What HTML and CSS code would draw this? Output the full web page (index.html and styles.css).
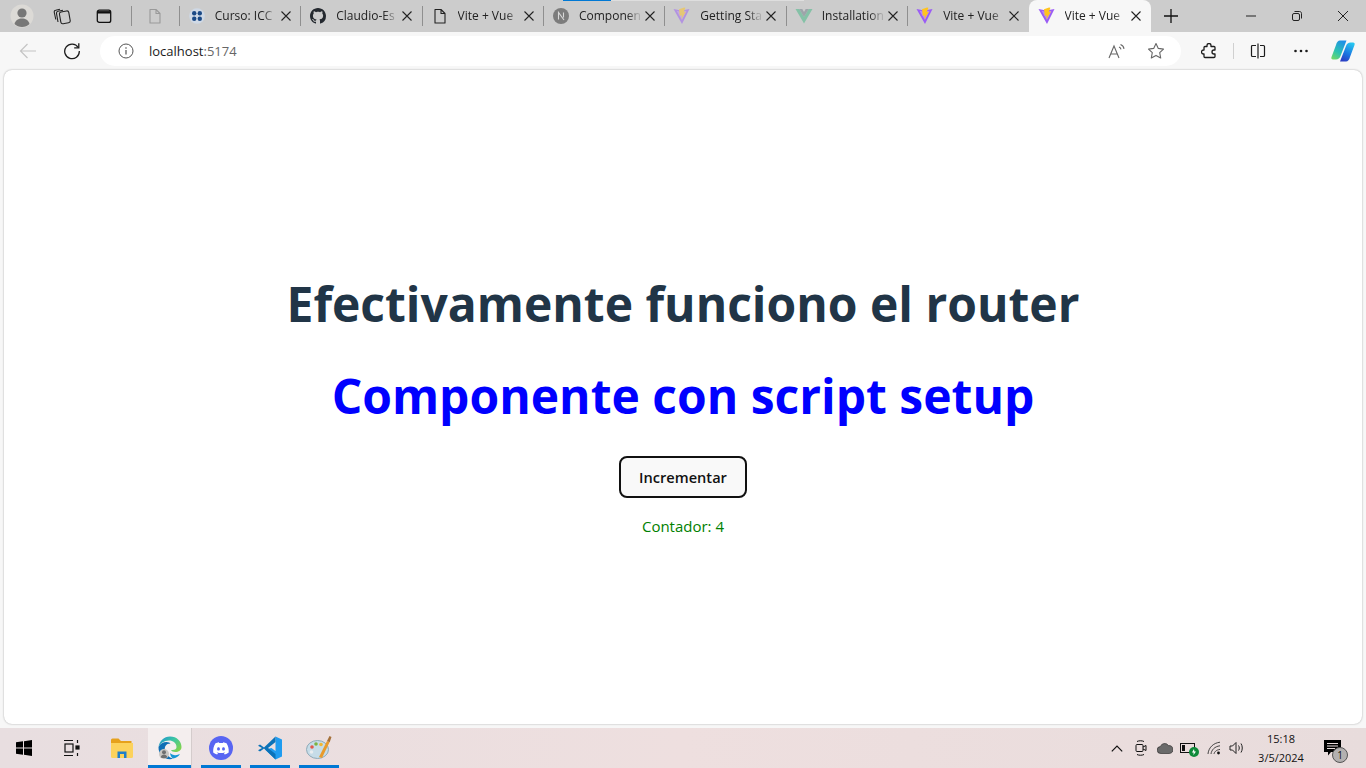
FILE: index.html
```html
<!DOCTYPE html>
<html lang="es">
<head>
  <meta charset="UTF-8" />
  <meta name="viewport" content="width=device-width, initial-scale=1.0"/>
  <title>Vite + Vue</title>
  <link rel="stylesheet" href="styles.css">
</head>
<body>
  <svg class="defs" width="0" height="0" aria-hidden="true">
    <symbol id="x" viewBox="0 0 12 12"><path d="M1.500 1.500l9 9M10.500 1.500l-9 9" fill="none" stroke="#222" stroke-width="1.100"/></symbol>
    <symbol id="doc" viewBox="0 0 16 16"><path d="M3 1.500h6l4 4v9.500H3zM9 1.500v4h4" fill="none" stroke="currentColor" stroke-width="1.100" stroke-linejoin="round"/></symbol>
    <symbol id="vite" viewBox="0 0 18 18">
      <path d="M0.500 2L8.300 3.600 16.500 2 9 17z" fill="#9a5cf5"/>
      <path d="M3.500 3.700L8.300 4.700 13.600 3.700 9 13z" fill="#c39cf8" opacity=".75"/>
      <path d="M11 0.500L6 2.300 6.800 9 8.800 8.200 8.400 12.600 13 4.600 10.800 5.200 12.400 0.800z" fill="#ffc41f"/>
    </symbol>
  </svg>

  <header class="tabstrip">
    <div class="strip-left">
      <span class="avatar">
        <svg width="24" height="24" viewBox="0 0 24 24"><circle cx="12" cy="12" r="11.500" fill="#dcdad6"/><circle cx="12" cy="9" r="4.600" fill="#777"/><path d="M4.500 20c1-4 4-5.500 7.500-5.500s6.500 1.500 7.500 5.500c-2 2-4.500 3-7.500 3s-5.500-1-7.500-3z" fill="#777"/></svg>
      </span>
      <span class="strip-btn">
        <svg width="18" height="18" viewBox="0 0 18 18" fill="none" stroke="#222" stroke-width="1.100"><rect x="7" y="4.500" width="9.500" height="12" rx="2" transform="rotate(-10 11 10)"/><path d="M5 15L3.500 6.500c-.2-1.200.4-2 1.500-2.200L10 3.300M2.800 12.500L1.300 5.500C1 4.300 1.600 3.400 2.600 3.200L7 2.200"/></svg>
      </span>
      <span class="strip-btn">
        <svg width="16" height="16" viewBox="0 0 16 16" fill="none" stroke="#111" stroke-width="1.300"><rect x="1.300" y="2.200" width="13.400" height="12.200" rx="2"/><path d="M1.300 4.300h13.400" stroke-width="2.400"/></svg>
      </span>
    </div>

    <div class="tab tab-blank"><svg class="fav blank" width="16" height="16"><use href="#doc"/></svg></div>

    <div class="tab">
      <svg class="fav" width="16" height="16" viewBox="0 0 16 16"><circle cx="8" cy="8" r="7.800" fill="#cfd9e6"/><g fill="#1c4a86"><circle cx="5.200" cy="5.200" r="2.200"/><circle cx="10.800" cy="5.200" r="2.200"/><circle cx="5.200" cy="10.800" r="2.200"/><circle cx="10.800" cy="10.800" r="2.200"/></g></svg>
      <span class="tab-title">Curso: ICC</span>
      <svg class="close" width="12" height="12"><use href="#x"/></svg>
    </div>
    <div class="tab">
      <svg class="fav" width="16" height="16" viewBox="0 0 16 16"><path fill="#24292f" d="M8 0C3.580 0 0 3.580 0 8c0 3.540 2.290 6.530 5.470 7.590.4.070.55-.17.55-.38 0-.19-.01-.82-.01-1.490-2.010.37-2.530-.49-2.690-.94-.09-.23-.48-.94-.82-1.130-.28-.15-.68-.52-.01-.53.63-.01 1.080.58 1.230.82.720 1.210 1.870.87 2.330.66.070-.52.280-.87.510-1.070-1.780-.2-3.640-.89-3.640-3.950 0-.87.310-1.590.820-2.150-.08-.2-.36-1.020.08-2.120 0 0 .67-.21 2.200.820.640-.18 1.320-.27 2-.27s1.360.09 2 .27c1.530-1.040 2.200-.82 2.200-.82.440 1.100.16 1.920.08 2.120.510.56.820 1.270.820 2.150 0 3.070-1.870 3.750-3.650 3.950.290.250.540.730.540 1.480 0 1.070-.01 1.930-.01 2.200 0 .21.150.46.550.38A8.010 8.010 0 0 0 16 8c0-4.420-3.580-8-8-8z"/></svg>
      <span class="tab-title">Claudio-Es</span>
      <svg class="close" width="12" height="12"><use href="#x"/></svg>
    </div>
    <div class="tab">
      <svg class="fav dark" width="16" height="16"><use href="#doc"/></svg>
      <span class="tab-title">Vite + Vue</span>
      <svg class="close" width="12" height="12"><use href="#x"/></svg>
    </div>
    <div class="tab">
      <svg class="fav" width="16" height="16" viewBox="0 0 16 16"><circle cx="8" cy="8" r="8" fill="#7c7c7c"/><path d="M5.500 11.500v-7l5.500 7.500M10.500 4.500v5" fill="none" stroke="#d8d8d8" stroke-width="1.100"/></svg>
      <span class="tab-title">Componen</span>
      <svg class="close" width="12" height="12"><use href="#x"/></svg>
    </div>
    <div class="tab">
      <svg class="fav faded" width="18" height="18"><use href="#vite"/></svg>
      <span class="tab-title">Getting Sta</span>
      <svg class="close" width="12" height="12"><use href="#x"/></svg>
    </div>
    <div class="tab">
      <svg class="fav faded" width="18" height="18" viewBox="0 0 18 18"><path d="M0.500 2h3.800L9 10l4.700-8h3.800L9 16.500z" fill="#41b883"/><path d="M4.300 2h3L9 5l1.700-3h3L9 10z" fill="#35495e" opacity=".6"/></svg>
      <span class="tab-title">Installation</span>
      <svg class="close" width="12" height="12"><use href="#x"/></svg>
    </div>
    <div class="tab">
      <svg class="fav" width="18" height="18"><use href="#vite"/></svg>
      <span class="tab-title">Vite + Vue</span>
      <svg class="close" width="12" height="12"><use href="#x"/></svg>
    </div>
    <div class="tab tab-active">
      <svg class="fav" width="18" height="18"><use href="#vite"/></svg>
      <span class="tab-title">Vite + Vue</span>
      <svg class="close" width="12" height="12"><use href="#x"/></svg>
    </div>

    <span class="new-tab">
      <svg width="16" height="16" viewBox="0 0 16 16"><path d="M8 1v14M1 8h14" stroke="#111" stroke-width="1.300"/></svg>
    </span>

    <div class="win-controls">
      <span class="win-btn"><svg width="12" height="12" viewBox="0 0 12 12"><path d="M1 6h10" stroke="#222" stroke-width="1"/></svg></span>
      <span class="win-btn"><svg width="12" height="12" viewBox="0 0 12 12" fill="none" stroke="#222"><rect x="1.500" y="3.500" width="7" height="7" rx="1.500"/><path d="M3.500 1.500h5c1.200 0 2 .8 2 2v5"/></svg></span>
      <span class="win-btn"><svg width="12" height="12" viewBox="0 0 12 12"><path d="M1 1l10 10M11 1L1 11" stroke="#222" stroke-width="1"/></svg></span>
    </div>
    <div class="load-bar"><span class="load-done"></span></div>
  </header>

  <nav class="toolbar">
    <span class="tool-btn back">
      <svg width="18" height="18" viewBox="0 0 18 18" fill="none" stroke="#c4c4c4" stroke-width="1.200"><path d="M17 9H1.500M8.500 2L1.500 9l7 7"/></svg>
    </span>
    <span class="tool-btn reload">
      <svg width="18" height="18" viewBox="0 0 18 18" fill="none" stroke="#1c1c1c" stroke-width="1.300"><path d="M15.200 5.500A7.300 7.300 0 1 0 16.300 9"/><path d="M15.800 1.200v4.600h-4.600"/></svg>
    </span>
    <div class="address">
      <svg class="info" width="16" height="16" viewBox="0 0 16 16" fill="none" stroke="#555"><circle cx="8" cy="8" r="7"/><path d="M8 7v4.500M8 4.300v1.400" stroke-width="1.200"/></svg>
      <span class="url">localhost<span class="port">:5174</span></span>
      <svg class="addr-icon read" width="18" height="16" viewBox="0 0 18 16" fill="none" stroke="#666" stroke-width="1.100"><path d="M1 15L6 3l5 12M2.800 11h6.400M11 4c1.200.4 1.800 1.200 2 2.400M12.500 1.500c2 .7 3.200 2.200 3.500 4.300"/></svg>
      <svg class="addr-icon star" width="18" height="18" viewBox="0 0 18 18" fill="none" stroke="#666" stroke-width="1.100" stroke-linejoin="round"><path d="M9 1.500l2.300 4.900 5.200.7-3.800 3.600 1 5.300L9 13.400 4.300 16l1-5.300L1.500 7.100l5.200-.7z"/></svg>
    </div>
    <span class="tool-btn ext">
      <svg width="16" height="16" viewBox="0 0 16 16" fill="none" stroke="#1c1c1c" stroke-width="1.300" stroke-linejoin="round"><path d="M6 2.500a2 2 0 0 1 4 0V3.500h3a1 1 0 0 1 1 1v2.500h-1a2 2 0 0 0 0 4h1v2.500a1 1 0 0 1-1 1H4a1 1 0 0 1-1-1V11H2.500a2 2 0 0 1 0-4H3V4.500a1 1 0 0 1 1-1h2z"/></svg>
    </span>
    <span class="tool-sep"></span>
    <span class="tool-btn split">
      <svg width="16" height="16" viewBox="0 0 16 16" fill="none" stroke="#1c1c1c" stroke-width="1.200"><path d="M6 2.500H2.500a1 1 0 0 0-1 1v9a1 1 0 0 0 1 1H6M10 2.500h3.500a1 1 0 0 1 1 1v9a1 1 0 0 1-1 1H10M8 .5v15"/></svg>
    </span>
    <span class="tool-btn more">
      <svg width="16" height="4" viewBox="0 0 16 4" fill="#1c1c1c"><circle cx="2.500" cy="2" r="1.300"/><circle cx="8" cy="2" r="1.300"/><circle cx="13.500" cy="2" r="1.300"/></svg>
    </span>
    <span class="tool-btn copilot">
      <svg width="24" height="24" viewBox="0 0 24 24"><defs><linearGradient id="cpa" x1="0.700" y1="0" x2="0.200" y2="1"><stop offset="0" stop-color="#1e8fe8"/><stop offset=".6" stop-color="#2cc3b0"/><stop offset="1" stop-color="#6fd86a"/></linearGradient><linearGradient id="cpb" x1="0.700" y1="0" x2="0.300" y2="1"><stop offset="0" stop-color="#27c6f0"/><stop offset=".6" stop-color="#1b74e0"/><stop offset="1" stop-color="#2b3fc4"/></linearGradient></defs><path d="M9 1.500h6.500L9.500 17c-.8 2-2.200 3.500-4.500 3.500H2c-1.500 0-2-1.200-1.500-2.500L5 6c.8-2.800 2-4.500 4-4.500z" fill="url(#cpa)"/><path d="M15 22.500H9L15 7c.8-2 2.200-3.500 4.500-3.500H22c1.500 0 2 1.200 1.500 2.500L19 18c-.8 2.800-2 4.500-4 4.500z" fill="url(#cpb)"/></svg>
    </span>
  </nav>

  <main class="viewport">
    <h1 class="title">Efectivamente funciono el router</h1>
    <h1 class="title title-blue">Componente con script setup</h1>
    <button class="counter-btn">Incrementar</button>
    <p class="counter">Contador: 4</p>
  </main>

  <footer class="taskbar">
    <span class="task start">
      <svg width="16" height="16" viewBox="0 0 16 16" fill="#000"><path d="M0 2.300l7-1v6.300H0zM8 1.200L16 0v7.600H8zM0 8.500h7v6.200l-7-1zM8 8.500h8V16l-8-1.200z"/></svg>
    </span>
    <span class="task taskview">
      <svg width="18" height="18" viewBox="0 0 18 18" fill="none" stroke="#111" stroke-width="1.200"><path d="M1 1.500h9M1 16.500h9"/><rect x="2" y="5" width="8" height="8"/><path d="M14.500 1v3M14.500 14v3"/><rect x="13" y="7" width="3" height="3" fill="#111"/></svg>
    </span>
    <span class="task explorer">
      <svg width="22" height="20" viewBox="0 0 22 20"><path d="M0 2a1.500 1.500 0 0 1 1.500-1.500h6L10 3h10.500v3H0z" fill="#e6a11c"/><path d="M0 5h22v13.500a1.500 1.500 0 0 1-1.500 1.500h-19A1.500 1.500 0 0 1 0 18.500z" fill="#fcd25c"/><path d="M6.500 20v-6.500h9V20h-2.500v-4h-4v4z" fill="#1f7fc9"/></svg>
    </span>
    <span class="task edge is-open is-active">
      <svg width="24" height="24" viewBox="0 0 24 24"><defs><linearGradient id="edg" x1="0" y1="0" x2="1" y2=".7"><stop offset="0" stop-color="#1a8ed8"/><stop offset=".55" stop-color="#3ec8a0"/><stop offset="1" stop-color="#7fd34e"/></linearGradient></defs><path d="M12 0.500c7 0 11.500 5 11.500 10.500 0 3.500-3 5-6 5-2.500 0-4-1-4.500-2 4 .5 5.500-1 5.500-3C18.500 7 15 4.500 11 4.500 6 4.500 2 7.500 0.500 11 1.500 5 6 .5 12 .5z" fill="url(#edg)"/><path d="M.5 11c1.500-3.500 5-5 8-5 2 0 3.500.8 4 1.500C8 7.500 6 11 7 15c.8 3.500 4 6.500 8 7.500-1 .5-2 .7-3 .7C5 23.200.3 18 .5 11z" fill="#0f6fb5"/><path d="M15 22.500c3-.3 5.500-2 7-4.500-2 1-4 1.500-6 1-1.500-.3-3-1-4-2 .3 2.500 1.300 4.500 3 5.500z" fill="#1497d6"/><circle cx="6" cy="18" r="5" fill="#c9c6c2"/><circle cx="6" cy="16.200" r="2" fill="#6f6f6f"/><path d="M2.700 21.300c.5-1.900 1.800-2.800 3.300-2.800s2.800.9 3.300 2.800c-.9.700-2.100.9-3.300.9s-2.400-.2-3.300-.9z" fill="#6f6f6f"/></svg>
    </span>
    <span class="task discord is-open">
      <svg width="24" height="24" viewBox="0 0 24 24"><circle cx="12" cy="12" r="12" fill="#5865f2"/><path d="M17.500 7.300a13 13 0 0 0-3.200-1l-.4.800a12 12 0 0 0-3.700 0l-.4-.8a13 13 0 0 0-3.300 1C4.500 10.400 4 13.400 4.200 16.400a13 13 0 0 0 4 2l.8-1.300-1.300-.6.300-.3c2.500 1.200 5.400 1.200 7.900 0l.3.300-1.300.6.800 1.300a13 13 0 0 0 4-2c.3-3.500-.5-6.500-2.200-9.100zM9.500 14.500c-.8 0-1.400-.7-1.400-1.600s.6-1.600 1.400-1.600 1.400.7 1.400 1.600-.6 1.600-1.400 1.600zm5 0c-.8 0-1.400-.7-1.400-1.600s.6-1.600 1.400-1.600 1.400.7 1.400 1.600-.6 1.600-1.400 1.600z" fill="#fff"/></svg>
    </span>
    <span class="task vscode is-open">
      <svg width="24" height="24" viewBox="0 0 24 24"><path d="M17.500 0.500L24 3.500v17l-6.500 3L7 13.500l6.500-1.500 4 3V9z" fill="#1f9cf0"/><path d="M17.500 0.500L6 11.500 2 8.500 0 9.700 4 12l-4 2.300 2 1.200 4-3 11.500 11V18L10 12l7.500-6z" fill="#0b72b8"/></svg>
    </span>
    <span class="task paint is-open">
      <svg width="26" height="26" viewBox="0 0 26 26"><ellipse cx="11.500" cy="14.500" rx="11" ry="9" fill="#c6dce8" stroke="#8eaab8"/><circle cx="6" cy="12" r="1.800" fill="#e2574c"/><circle cx="10" cy="9" r="1.800" fill="#7cb342"/><circle cx="15" cy="9.500" r="1.800" fill="#f2b632"/><circle cx="5.500" cy="17" r="1.800" fill="#e9edf0"/><path d="M13 22L21 6l2.500 1.200L16 23z" fill="#e89a2b"/><path d="M21 6l2.500-5 2 1-1.800 5.200z" fill="#a5713a"/></svg>
    </span>

    <div class="tray">
      <svg class="tray-icon chev" width="12" height="7" viewBox="0 0 12 7" fill="none" stroke="#111" stroke-width="1.200"><path d="M.8 6.300L6 1l5.200 5.300"/></svg>
      <svg class="tray-icon meet" width="12" height="16" viewBox="0 0 12 16" fill="none" stroke="#111"><rect x="1" y="4.500" width="7" height="7" rx="1"/><path d="M8 7l3-1.500v5L8 9M2 1.500c2-1 5-1 7 0M2 14.500c2 1 5 1 7 0"/></svg>
      <svg class="tray-icon cloud" width="16" height="11" viewBox="0 0 16 11"><path d="M4 10.500a3.500 3.500 0 0 1-.6-7A4.500 4.500 0 0 1 11.500 2.600a3.900 3.900 0 0 1 .8 7.900z" fill="#6a6a6a" stroke="#222" stroke-width=".6"/></svg>
      <span class="battery">
        <svg width="16" height="10" viewBox="0 0 16 10" fill="none" stroke="#111"><rect x=".5" y=".5" width="14" height="9"/><rect x="2" y="2" width="3" height="6" fill="#111" stroke="none"/></svg>
        <svg class="plug" width="10" height="10" viewBox="0 0 10 10"><circle cx="5" cy="5" r="5" fill="#0f8a3a"/><path d="M5 2L3 5.500h1.600L4.500 8 7 4.500H5.400z" fill="#fff"/></svg>
      </span>
      <svg class="tray-icon wifi" width="14" height="14" viewBox="0 0 14 14" fill="none" stroke="#333" stroke-width=".9"><path d="M1 13C1.500 7 6 2 13 1.200M4 13c.5-4 3.500-7.500 9-8.200M7 13c.4-2 2-4 6-4.600"/><circle cx="11.500" cy="12" r="1.400" fill="#111" stroke="none"/></svg>
      <svg class="tray-icon vol" width="16" height="14" viewBox="0 0 16 14" fill="none" stroke="#222"><path d="M1 5h2.500L7 1.500v11L3.500 9H1zM9.500 4.500c1 1.500 1 3.500 0 5M12 2.500c1.700 2.700 1.700 6.300 0 9"/></svg>
      <div class="clock"><span>15:18</span><span>3/5/2024</span></div>
      <span class="notif">
        <svg width="18" height="16" viewBox="0 0 18 16"><path d="M0 0h17v12H7l-3 3.500V12H0z" fill="#000"/><path d="M3 3.500h11M3 6h11M3 8.500h8" stroke="#e8dcdc" stroke-width="1"/></svg>
        <span class="notif-count">1</span>
      </span>
    </div>
  </footer>
</body>
</html>
```
FILE: styles.css
```css
* {
  box-sizing: border-box;
}
html, body {
  height: 100%;
}
body {
  margin: 0;
  display: flex;
  flex-direction: column;
  height: 768px;
  overflow: hidden;
  background: #f7f7f7;
  font-family: "Open Sans", "Noto Sans", Arial, sans-serif;
}
.defs {
  position: absolute;
}

/* tab strip */
.tabstrip {
  position: relative;
  display: flex;
  align-items: center;
  height: 32px;
  background: #cccccc;
  flex: none;
}
.strip-left {
  display: flex;
  align-items: center;
  width: 131px;
  flex: none;
}
.avatar {
  display: flex;
  margin-left: 10px;
}
.strip-btn {
  display: flex;
}
.avatar + .strip-btn {
  margin-left: 19px;
}
.strip-btn + .strip-btn {
  margin-left: 25px;
}
.tab {
  position: relative;
  display: flex;
  align-items: center;
  width: 121.400px;
  height: 32px;
  padding-left: 10px;
  flex: none;
  font-size: 12px;
  color: #222;
}
.tab::before {
  content: "";
  position: absolute;
  left: 0;
  top: 6px;
  height: 20px;
  width: 1px;
  background: #8f8f8f;
}
.tab-blank {
  width: 47.800px;
  padding-left: 16px;
  color: #999;
}
.fav {
  flex: none;
  margin-left: -1px;
  width: 18px;
}
.dark {
  color: #222;
}
.faded {
  opacity: .5;
}
.tab-title {
  width: 63px;
  margin-left: 9px;
  white-space: nowrap;
  flex: none;
  line-height: 16px;
  -webkit-mask-image: linear-gradient(to right, #000 76%, rgba(0, 0, 0, .2) 94%);
  mask-image: linear-gradient(to right, #000 76%, rgba(0, 0, 0, .2) 94%);
}
.close {
  margin-left: 2px;
  flex: none;
}
.tab-active {
  width: 122px;
  background: #f7f7f7;
  border-radius: 8px 8px 0 0;
}
.tab-active::before {
  display: none;
}
.new-tab {
  display: flex;
  margin-left: 12px;
}
.win-controls {
  display: flex;
  margin-left: auto;
}
.win-btn {
  display: flex;
  align-items: center;
  justify-content: center;
  width: 46px;
}
.load-bar {
  position: absolute;
  left: 563px;
  top: 0;
  width: 241px;
  height: 1px;
  background: #dedede;
}
.load-done {
  display: block;
  width: 48px;
  height: 1px;
  background: #0078d4;
}

/* address bar row */
.toolbar {
  display: flex;
  align-items: center;
  height: 38px;
  flex: none;
  background: #f7f7f7;
}
.tool-btn {
  display: flex;
  align-items: center;
  justify-content: center;
  flex: none;
}
.back {
  margin-left: 19px;
}
.reload {
  margin-left: 26px;
}
.address {
  display: flex;
  align-items: center;
  width: 1081px;
  height: 30px;
  margin-left: 19px;
  padding-left: 18px;
  background: #fff;
  border-radius: 15px;
  flex: none;
}
.url {
  margin-left: 15px;
  font-size: 13px;
  color: #1a1a1a;
}
.port {
  color: #666;
}
.read {
  margin-left: auto;
}
.star {
  margin-left: 21px;
  margin-right: 16px;
}
.ext {
  margin-left: 20px;
}
.tool-sep {
  width: 1px;
  height: 16px;
  margin-left: 16px;
  background: #d0d0d0;
}
.split {
  margin-left: 16px;
}
.more {
  margin-left: 27px;
}
.copilot {
  margin-left: 22px;
}

/* page area */
.viewport {
  display: flex;
  flex-direction: column;
  align-items: center;
  height: 654px;
  margin: 0 4px;
  padding-top: 200px;
  background: #fff;
  border-radius: 8px;
  box-shadow: 0 0 2px rgba(0, 0, 0, .35);
  flex: none;
}
.title {
  margin: 0;
  font-size: 48px;
  font-weight: 700;
  line-height: 68px;
  color: #213547;
  text-align: center;
}
.title-blue {
  margin-top: 24px;
  color: #0000ff;
}
.counter-btn {
  margin-top: 26px;
  width: 128px;
  height: 42px;
  padding: 0;
  border: 2px solid #111;
  border-radius: 8px;
  background: #f9f9f9;
  color: #111;
  font-family: inherit;
  font-size: 14.600px;
  font-weight: 600;
  cursor: pointer;
}
.counter {
  margin: 17px 0 0;
  font-size: 15px;
  line-height: 22px;
  color: #008000;
}

/* windows taskbar */
.taskbar {
  display: flex;
  align-items: center;
  height: 40px;
  margin-top: 4px;
  flex: none;
  background: linear-gradient(to right, #e8dee0, #eedfdf 50%, #e8dcdc);
}
.task {
  position: relative;
  display: flex;
  align-items: center;
  justify-content: center;
  height: 40px;
  flex: none;
}
.start {
  width: 48px;
}
.taskview {
  width: 48px;
}
.explorer {
  width: 52px;
}
.edge {
  width: 44px;
  border-right: 1px solid #d4cccc;
}
.discord {
  width: 40px;
  margin-left: 9px;
}
.vscode {
  width: 40px;
  margin-left: 9px;
}
.paint {
  width: 40px;
  margin-left: 9px;
}
.is-open::after {
  content: "";
  position: absolute;
  left: 0;
  right: 0;
  bottom: 0;
  height: 3px;
  background: #0078d4;
}
.is-active {
  background: #f4eeee;
}
.tray {
  display: flex;
  align-items: center;
  margin-left: auto;
  flex: none;
}
.tray-icon {
  flex: none;
}
.meet {
  margin-left: 12px;
}
.cloud {
  margin-left: 10px;
}
.battery {
  position: relative;
  display: flex;
  margin-left: 7px;
  margin-right: 2px;
}
.plug {
  position: absolute;
  right: -3px;
  bottom: -4px;
}
.wifi {
  margin-left: 9px;
}
.vol {
  margin-left: 8px;
}
.clock {
  display: flex;
  flex-direction: column;
  align-items: center;
  width: 60px;
  margin-left: 6px;
  font-size: 11px;
  line-height: 19px;
  color: #111;
}
.notif {
  position: relative;
  display: flex;
  margin-left: 13px;
  margin-right: 24px;
}
.notif-count {
  position: absolute;
  right: -6px;
  bottom: -7px;
  width: 16px;
  height: 16px;
  border-radius: 50%;
  background: #b3b0b0;
  border: 1px solid #555;
  font-size: 10px;
  line-height: 14px;
  text-align: center;
  color: #111;
}
```
